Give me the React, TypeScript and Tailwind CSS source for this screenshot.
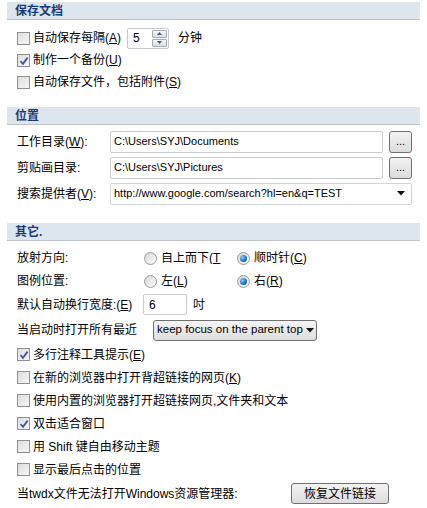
import React from 'react';

const font = { fontFamily: '"Liberation Sans", "Noto Sans CJK SC", sans-serif' };

function Header({ title }: { title: string }) {
  return (
    <div className="mx-[7px] h-[18px] bg-[#dde6ed] border-b border-[#bfc3c8] flex items-center pl-[8px]">
      <span className="text-[12px] font-bold text-[#1b3a78]">{title}</span>
    </div>
  );
}

function Acc({ k }: { k: string }) {
  return (
    <span>
      (<span className="underline">{k}</span>)
    </span>
  );
}

function Checkbox({ checked }: { checked?: boolean }) {
  return (
    <span className="relative inline-flex w-[13px] h-[13px] border border-[#8e8f8f] bg-gradient-to-br from-[#dcdcdc] to-[#f8f8f8] shrink-0">
      {checked && (
        <svg className="absolute left-[1px] top-[1px]" width="10" height="10" viewBox="0 0 10 10">
          <path d="M1.5 5.2 L4 7.8 L8.6 1.6" fill="none" stroke="#3b57a8" strokeWidth="1.8" />
        </svg>
      )}
    </span>
  );
}

function Radio({ checked }: { checked?: boolean }) {
  return (
    <span className="inline-flex items-center justify-center w-[13px] h-[13px] rounded-full border border-[#9a9a9a] bg-gradient-to-br from-[#d8d8d8] to-[#fafafa] shrink-0">
      {checked && (
        <span className="w-[7px] h-[7px] rounded-full bg-[radial-gradient(circle_at_35%_35%,#7fd0ff,#0f5fa8_70%)]" />
      )}
    </span>
  );
}

function CheckRow({ checked, children, h = 'h-[22px]' }: { checked?: boolean; children: React.ReactNode; h?: string }) {
  return (
    <div className={`flex items-center gap-[3px] pl-[17px] ${h}`}>
      <Checkbox checked={checked} />
      <span className="text-[12px] text-black leading-none">{children}</span>
    </div>
  );
}

function Dots() {
  return (
    <button className="w-[23px] h-[22px] rounded-[3px] border border-[#707070] bg-gradient-to-b from-[#f3f3f3] to-[#dcdcdc] flex items-end justify-center pb-[5px] text-[11px] leading-none text-black">
      ...
    </button>
  );
}

function Arrow() {
  return (
    <svg width="8" height="5" viewBox="0 0 8 5">
      <path d="M0 0 H8 L4 4.5 Z" fill="#111" />
    </svg>
  );
}

export default function App() {
  return (
    <div className="w-[427px] h-[508px] bg-white overflow-hidden text-black pt-[2px]" style={font}>
      <Header title="保存文档" />

      <div className="pt-[7px]">
        <div className="flex items-center pl-[17px] h-[22px]">
          <Checkbox />
          <span className="ml-[3px] text-[12px] leading-none">自动保存每隔<Acc k="A" /></span>
          <div className="ml-[6px] w-[42px] h-[21px] border border-[#c5c9cf] rounded-[2px] flex items-center justify-between pl-[5px] pr-[1px]">
            <span className="text-[12px] leading-none">5</span>
            <div className="flex flex-col gap-[1px]">
              <div className="w-[15px] h-[8px] border border-[#a7acb3] rounded-[1px] bg-gradient-to-b from-[#f6f7f9] to-[#d9dde3] flex items-center justify-center">
                <svg width="5" height="3" viewBox="0 0 5 3"><path d="M0 3 L2.5 0 L5 3 Z" fill="#3f5c8a" /></svg>
              </div>
              <div className="w-[15px] h-[8px] border border-[#a7acb3] rounded-[1px] bg-gradient-to-b from-[#f6f7f9] to-[#d9dde3] flex items-center justify-center">
                <svg width="5" height="3" viewBox="0 0 5 3"><path d="M0 0 L2.5 3 L5 0 Z" fill="#3f5c8a" /></svg>
              </div>
            </div>
          </div>
          <span className="ml-[9px] text-[12px] leading-none">分钟</span>
        </div>
        <CheckRow checked>制作一个备份<Acc k="U" /></CheckRow>
        <CheckRow>自动保存文件，包括附件<Acc k="S" /></CheckRow>
      </div>

      <div className="mt-[14px]">
        <Header title="位置" />
      </div>

      <div className="pt-[5px] pl-[17px] pr-[15px] flex flex-col gap-[3px]">
        <div className="flex items-center h-[23px]">
          <span className="w-[93px] text-[12px] leading-none">工作目录<Acc k="W" />:</span>
          <div className="w-[273px] h-[22px] border border-[#c8cbd0] rounded-[2px] flex items-center pl-[3px] text-[11px] leading-none">C:\Users\SYJ\Documents</div>
          <div className="ml-[6px]"><Dots /></div>
        </div>
        <div className="flex items-center h-[23px]">
          <span className="w-[93px] text-[12px] leading-none">剪贴画目录:</span>
          <div className="w-[273px] h-[22px] border border-[#c8cbd0] rounded-[2px] flex items-center pl-[3px] text-[11px] leading-none">C:\Users\SYJ\Pictures</div>
          <div className="ml-[6px]"><Dots /></div>
        </div>
        <div className="flex items-center h-[23px]">
          <span className="w-[93px] text-[12px] leading-none">搜索提供者<Acc k="V" />:</span>
          <div className="w-[302px] h-[22px] border border-[#d0d3d8] rounded-[2px] flex items-center justify-between pl-[3px] pr-[6px] text-[11px] leading-none">
            <span>http://www.google.com/search?hl=en&amp;q=TEST</span>
            <Arrow />
          </div>
        </div>
      </div>

      <div className="mt-[18px]">
        <Header title="其它." />
      </div>

      <div className="pt-[5px]">
        <div className="flex items-center h-[24px] pl-[17px] text-[12px] leading-none">
          <span className="w-[127px]">放射方向:</span>
          <Radio />
          <span className="ml-[4px] w-[76px] overflow-hidden whitespace-nowrap">自上而下<span>(<span className="underline">T</span></span></span>
          <Radio checked />
          <span className="ml-[4px]">顺时针<Acc k="C" /></span>
        </div>
        <div className="flex items-center h-[22px] pl-[17px] text-[12px] leading-none">
          <span className="w-[127px]">图例位置:</span>
          <Radio />
          <span className="ml-[4px] w-[76px]">左<Acc k="L" /></span>
          <Radio checked />
          <span className="ml-[4px]">右<Acc k="R" /></span>
        </div>
        <div className="flex items-center h-[25px] pl-[17px] text-[12px] leading-none">
          <span className="w-[126px]">默认自动换行宽度:<Acc k="E" /></span>
          <div className="w-[44px] h-[21px] border border-[#c8cbd0] rounded-[2px] flex items-center pl-[5px] text-[12px]">6</div>
          <span className="ml-[6px]">吋</span>
        </div>
        <div className="flex items-center h-[26px] pl-[17px] text-[12px] leading-none">
          <span className="w-[136px]">当启动时打开所有最近</span>
          <div className="w-[164px] h-[21px] border border-[#707070] rounded-[3px] bg-gradient-to-b from-[#f4f4f4] to-[#dedede] flex items-center justify-between pl-[3px] pr-[4px]">
            <span className="text-[11.5px] whitespace-nowrap">keep focus on the parent top</span>
            <div className="flex items-center h-full pl-[3px]">
              <Arrow />
            </div>
          </div>
        </div>
        <CheckRow checked h="h-[23px]">多行注释工具提示<Acc k="E" /></CheckRow>
        <CheckRow h="h-[23px]">在新的浏览器中打开背超链接的网页<Acc k="K" /></CheckRow>
        <CheckRow h="h-[23px]">使用内置的浏览器打开超链接网页,文件夹和文本</CheckRow>
        <CheckRow checked h="h-[23px]">双击适合窗口</CheckRow>
        <CheckRow h="h-[23px]">用 Shift 键自由移动主题</CheckRow>
        <CheckRow h="h-[23px]">显示最后点击的位置</CheckRow>
        <div className="flex items-center h-[25px] pl-[17px] text-[12px] leading-none">
          <span className="w-[274px]">当twdx文件无法打开Windows资源管理器:</span>
          <button className="w-[98px] h-[21px] border border-[#707070] rounded-[3px] bg-gradient-to-b from-[#f4f4f4] to-[#dcdcdc] text-[12px] leading-none">恢复文件链接</button>
        </div>
      </div>
    </div>
  );
}
